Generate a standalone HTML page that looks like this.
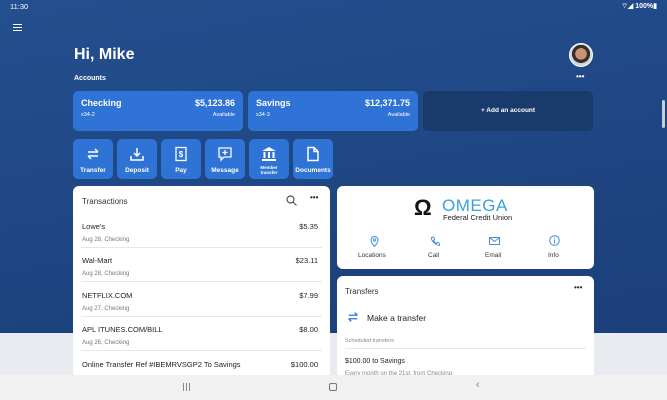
<!DOCTYPE html>
<html><head><meta charset="utf-8"><style>
*{box-sizing:border-box;margin:0;padding:0}
body{width:667px;height:400px;overflow:hidden;font-family:"Liberation Sans",sans-serif;position:relative;background:#e8ebf0}
.bg{position:absolute;left:0;top:0;width:667px;height:333px;background:linear-gradient(170deg,#244f8e 0%,#1f4784 50%,#1b3f79 100%)}
.abs{position:absolute}
.w{color:#fff}
.card{position:absolute;background:#2f73d6;border-radius:5px;color:#fff}
.btn{position:absolute;top:139px;width:40px;height:40px;background:#2f73d6;border-radius:5px;color:#fff;font-size:6.5px;font-weight:bold;text-align:center}
.btn svg{position:absolute;left:12px;top:7px}
.btn span{position:absolute;left:0;right:0;bottom:5px}
.wc{position:absolute;background:#fff;border-radius:6px}
.tr{position:absolute;left:8px;right:8px;height:34px;border-bottom:1px solid #e6e6e6;font-size:7.5px;color:#222}
.tr .s{position:absolute;top:23px;left:1px;font-size:6px;color:#777}
.tr .n{position:absolute;top:8px;left:1px}
.tr .a{position:absolute;top:8px;right:4px}
</style></head><body>
<div class="bg"></div>
<div class="abs w" style="left:10px;top:2px;font-size:7.5px">11:30</div>
<div class="abs w" style="right:10px;top:2px;font-size:7px;font-weight:bold">⌔◢ 100%▮</div>
<div class="abs" style="left:13px;top:24px;width:9px;height:7px;border-top:1.5px solid #fff;border-bottom:1.5px solid #fff"><div style="margin-top:1.5px;height:1.5px;background:#fff"></div></div>
<div class="abs w" style="left:74px;top:46px;font-size:16px;font-weight:bold">Hi, Mike</div>
<div class="abs w" style="left:74px;top:75px;font-size:7px;font-weight:bold">Accounts</div>
<div class="abs" style="left:569px;top:43px;width:24px;height:24px;border-radius:50%;background:radial-gradient(circle at 50% 45%,#c89474 0 35%,#3a2e2a 36% 55%,#cfd6dd 56%);border:1px solid #fff"></div>
<div class="abs w" style="left:576px;top:72px;font-size:8px;font-weight:bold">•••</div>
<div class="card" style="left:73px;top:91px;width:170px;height:40px">
<div class="abs" style="left:8px;top:7px;font-size:9px;font-weight:bold">Checking</div>
<div class="abs" style="right:8px;top:7px;font-size:9px;font-weight:bold">$5,123.86</div>
<div class="abs" style="left:8px;top:21px;font-size:5.5px">x34-2</div>
<div class="abs" style="right:8px;top:21px;font-size:5.5px">Available</div></div>
<div class="card" style="left:248px;top:91px;width:170px;height:40px">
<div class="abs" style="left:8px;top:7px;font-size:9px;font-weight:bold">Savings</div>
<div class="abs" style="right:8px;top:7px;font-size:9px;font-weight:bold">$12,371.75</div>
<div class="abs" style="left:8px;top:21px;font-size:5.5px">x34-3</div>
<div class="abs" style="right:8px;top:21px;font-size:5.5px">Available</div></div>
<div class="abs w" style="left:423px;top:91px;width:170px;height:40px;background:#1a3a6c;border-radius:5px;font-size:6.5px;font-weight:bold;text-align:center;line-height:40px">+ Add an account</div>
<div class="btn" style="left:73px"><svg width="16" height="16" viewBox="0 0 16 16" fill="none" stroke="#fff" stroke-width="1.5"><path d="M3 6h10M10 3l3 3M13 10H3M6 13l-3-3"/></svg><span>Transfer</span></div>
<div class="btn" style="left:117px"><svg width="16" height="16" viewBox="0 0 16 16" fill="none" stroke="#fff" stroke-width="1.5"><path d="M8 2v8M5 7l3 3 3-3M2 10v4h12v-4"/></svg><span>Deposit</span></div>
<div class="btn" style="left:161px"><svg width="16" height="16" viewBox="0 0 16 16" fill="none" stroke="#fff" stroke-width="1.3"><rect x="3" y="1.5" width="10" height="13"/><text x="8" y="11" font-size="8" fill="#fff" stroke="none" text-anchor="middle" font-family="Liberation Sans">$</text></svg><span>Pay</span></div>
<div class="btn" style="left:205px"><svg width="16" height="16" viewBox="0 0 16 16" fill="none" stroke="#fff" stroke-width="1.3"><path d="M2 2h12v9H7l-3 3v-3H2z"/><path d="M8 4v5M5.5 6.5h5"/></svg><span>Message</span></div>
<div class="btn" style="left:249px"><svg width="16" height="16" viewBox="0 0 16 16" fill="#fff"><path d="M8 1l7 4H1z"/><rect x="2.5" y="6" width="2" height="6"/><rect x="7" y="6" width="2" height="6"/><rect x="11.5" y="6" width="2" height="6"/><rect x="1" y="13" width="14" height="2"/></svg><span style="font-size:4.5px;bottom:4px">Member<br>transfer</span></div>
<div class="btn" style="left:293px"><svg width="16" height="16" viewBox="0 0 16 16" fill="none" stroke="#fff" stroke-width="1.5"><path d="M3 1.5h6l4 4v9H3z M9 1.5v4h4"/></svg><span>Documents</span></div>
<div class="wc" style="left:73px;top:186px;width:257px;height:200px">
<div class="abs" style="left:9px;top:11px;font-size:8px;color:#333">Transactions</div>
<svg class="abs" style="left:213px;top:9px" width="11" height="11" viewBox="0 0 11 11" fill="none" stroke="#555" stroke-width="1.2"><circle cx="4.5" cy="4.5" r="3.5"/><path d="M7 7l3.5 3.5"/></svg>
<div class="abs" style="left:237px;top:7px;font-size:8px;color:#333;font-weight:bold">•••</div>
<div class="tr" style="top:28px"><div class="n">Lowe's</div><div class="a">$5.35</div><div class="s">Aug 28, Checking</div></div>
<div class="tr" style="top:62px"><div class="n">Wal-Mart</div><div class="a">$23.11</div><div class="s">Aug 28, Checking</div></div>
<div class="tr" style="top:97px"><div class="n">NETFLIX.COM</div><div class="a">$7.99</div><div class="s">Aug 27, Checking</div></div>
<div class="tr" style="top:131px"><div class="n">APL ITUNES.COM/BILL</div><div class="a">$8.00</div><div class="s">Aug 26, Checking</div></div>
<div class="tr" style="top:166px;border:none"><div class="n">Online Transfer Ref #IBEMRVSGP2 To Savings</div><div class="a">$100.00</div></div>
</div>
<div class="wc" style="left:337px;top:186px;width:257px;height:83px">
<div class="abs" style="left:77px;top:9px;font-size:22px;font-weight:bold;color:#111">Ω</div>
<div class="abs" style="left:105px;top:10px;font-size:17px;color:#3aa0e0;letter-spacing:0.5px">OMEGA</div>
<div class="abs" style="left:106px;top:27px;font-size:7.5px;color:#222">Federal Credit Union</div>
<svg class="abs" style="left:33px;top:50px" width="9" height="11" viewBox="0 0 9 11" fill="none" stroke="#4a8fd8" stroke-width="1"><path d="M4.5 10.5S1 6.5 1 4a3.5 3.5 0 017 0c0 2.5-3.5 6.5-3.5 6.5z"/><circle cx="4.5" cy="4" r="1.2"/></svg>
<svg class="abs" style="left:93px;top:50px" width="10" height="10" viewBox="0 0 10 10" fill="none" stroke="#4a8fd8" stroke-width="1"><path d="M1.5 1.5l2-0.5 1.2 2.5-1.2 1c.8 1.5 1.5 2.2 3 3l1-1.2 2.5 1.2-.5 2C6 9.5.5 4 1.5 1.5z"/></svg>
<svg class="abs" style="left:152px;top:51px" width="11" height="8" viewBox="0 0 11 8" fill="none" stroke="#4a8fd8" stroke-width="1"><rect x=".5" y=".5" width="10" height="7"/><path d="M.5 .5l5 4 5-4"/></svg>
<svg class="abs" style="left:212px;top:49px" width="11" height="11" viewBox="0 0 11 11" fill="none" stroke="#4a8fd8" stroke-width="1"><circle cx="5.5" cy="5.5" r="4.8"/><path d="M5.5 4.5v4M5.5 2.5v1"/></svg>
<div class="abs" style="left:21px;top:66px;font-size:6.5px;color:#333">Locations</div>
<div class="abs" style="left:91px;top:66px;font-size:6.5px;color:#333">Call</div>
<div class="abs" style="left:148px;top:66px;font-size:6.5px;color:#333">Email</div>
<div class="abs" style="left:211px;top:66px;font-size:6.5px;color:#333">Info</div>
</div>
<div class="wc" style="left:337px;top:276px;width:257px;height:110px">
<div class="abs" style="left:8px;top:11px;font-size:8px;color:#333">Transfers</div>
<div class="abs" style="left:237px;top:7px;font-size:8px;color:#333;font-weight:bold">•••</div>
<svg class="abs" style="left:9px;top:34px" width="14" height="14" viewBox="0 0 16 16" fill="none" stroke="#2f73d6" stroke-width="1.5"><path d="M3 6h10M10 3l3 3M13 10H3M6 13l-3-3"/></svg>
<div class="abs" style="left:30px;top:37px;font-size:8.5px;color:#222">Make a transfer</div>
<div class="abs" style="left:8px;top:62px;font-size:5.5px;color:#888">Scheduled transfers</div>
<div class="abs" style="left:8px;right:8px;top:72px;border-top:1px solid #e6e6e6"></div>
<div class="abs" style="left:8px;top:82px;font-size:7px;color:#222">$100.00 to Savings</div>
<div class="abs" style="left:8px;top:95px;font-size:6px;color:#888">Every month on the 21st, from Checking</div>
</div>
<div class="abs" style="left:0;top:375px;width:667px;height:25px;background:#f1f1f1">
<div class="abs" style="left:183px;top:8px;width:7px;height:8px;border-left:1px solid #888;border-right:1px solid #888"><div style="margin-left:2px;width:1px;height:8px;background:#888"></div></div>
<div class="abs" style="left:329px;top:8px;width:8px;height:8px;border:1px solid #777;border-radius:2px"></div>
<div class="abs" style="left:476px;top:4px;font-size:11px;color:#888">‹</div>
</div>
<div class="abs" style="left:662px;top:100px;width:3px;height:28px;background:#c8cdd6;border-radius:2px"></div>
</body></html>
